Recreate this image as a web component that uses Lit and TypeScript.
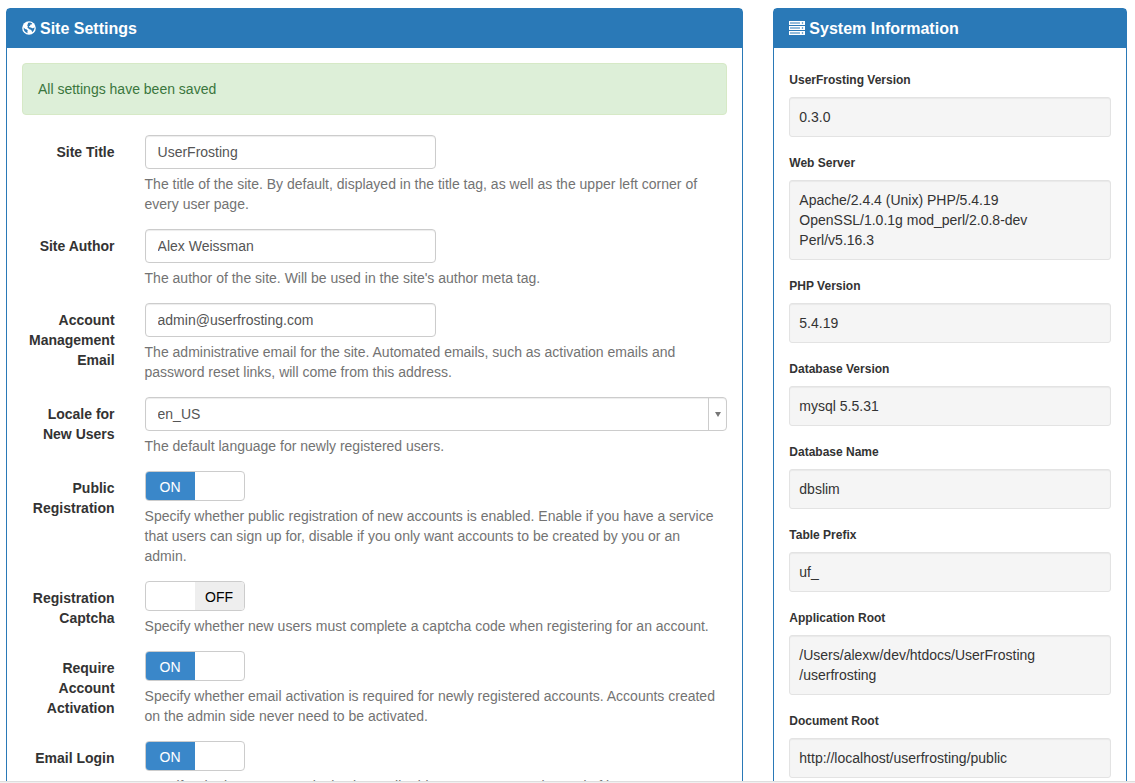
import { LitElement, html, css, svg, nothing } from "lit";
import { customElement, property } from "lit/decorators.js";

const FONT = css`14px/20px "Liberation Sans", Arial, sans-serif`;

@customElement("site-panel")
class SitePanel extends LitElement {
  @property() heading = "";

  static styles = css`
    :host {
      display: block;
      box-sizing: border-box;
      border: 1px solid #2a79b7;
      border-radius: 4px;
      background: #fff;
    }
    .head {
      display: flex;
      align-items: center;
      gap: 4px;
      padding: 10px 15px 8px;
      border-bottom: 1px solid #2a79b7;
      background: #2a79b7;
      color: #fff;
    }
    .title {
      margin: 0;
      font-size: 16px;
      line-height: 20px;
      font-weight: 700;
    }
    .body {
      padding: 15px;
    }
  `;

  render() {
    return html`
      <header class="head">
        <slot name="icon"></slot>
        <h3 class="title">${this.heading}</h3>
      </header>
      <div class="body"><slot></slot></div>
    `;
  }
}

type Field = {
  id: string;
  label: string;
  kind: "text" | "email" | "select" | "toggle";
  value?: string;
  on?: boolean;
  help: string;
};

const FIELDS: Field[] = [
  { id: "site_title", label: "Site Title", kind: "text", value: "UserFrosting", help: "The title of the site. By default, displayed in the title tag, as well as the upper left corner of every user page." },
  { id: "author", label: "Site Author", kind: "text", value: "Alex Weissman", help: "The author of the site. Will be used in the site's author meta tag." },
  { id: "admin_email", label: "Account Management Email", kind: "email", value: "admin@userfrosting.com", help: "The administrative email for the site. Automated emails, such as activation emails and password reset links, will come from this address." },
  { id: "default_locale", label: "Locale for New Users", kind: "select", value: "en_US", help: "The default language for newly registered users." },
  { id: "can_register", label: "Public Registration", kind: "toggle", on: true, help: "Specify whether public registration of new accounts is enabled. Enable if you have a service that users can sign up for, disable if you only want accounts to be created by you or an admin." },
  { id: "enable_captcha", label: "Registration Captcha", kind: "toggle", on: false, help: "Specify whether new users must complete a captcha code when registering for an account." },
  { id: "require_activation", label: "Require Account Activation", kind: "toggle", on: true, help: "Specify whether email activation is required for newly registered accounts. Accounts created on the admin side never need to be activated." },
  { id: "email_login", label: "Email Login", kind: "toggle", on: true, help: "Specify whether users can login via email address or username instead of just username." },
];

const INFO: [string, string[]][] = [
  ["UserFrosting Version", ["0.3.0"]],
  ["Web Server", ["Apache/2.4.4 (Unix) PHP/5.4.19 OpenSSL/1.0.1g mod_perl/2.0.8-dev Perl/v5.16.3"]],
  ["PHP Version", ["5.4.19"]],
  ["Database Version", ["mysql 5.5.31"]],
  ["Database Name", ["dbslim"]],
  ["Table Prefix", ["uf_"]],
  ["Application Root", ["/Users/alexw/dev/htdocs/UserFrosting", "/userfrosting"]],
  ["Document Root", ["http://localhost/userfrosting/public"]],
];

@customElement("app-root")
class AppRoot extends LitElement {
  static styles = css`
    :host {
      display: flex;
      flex-direction: column;
      height: 100vh;
      background: #fff;
      color: #333;
      font: ${FONT};
    }
    *,
    *::before,
    *::after {
      box-sizing: border-box;
    }
    .page {
      flex: 1;
      min-height: 0;
      overflow: hidden;
      display: grid;
      grid-template-columns: calc((100% + 30px) * 2 / 3 - 30px) minmax(0, 1fr);
      column-gap: 30px;
      align-items: start;
      padding: 8px 8px 0 6px;
    }
    .edge {
      flex: none;
      height: 2px;
      border-top: 1px solid #dedede;
      background: #f0f0f0;
    }
    .icon {
      display: block;
      margin-bottom: 2px;
      fill: #fff;
    }
    .alert {
      margin-bottom: 20px;
      padding: 15px;
      border: 1px solid #d6e9c6;
      border-radius: 4px;
      background: #ddefd8;
      color: #3a763d;
    }
    .form {
      display: grid;
      row-gap: 15px;
    }
    .row {
      display: grid;
      grid-template-columns: calc((100% + 30px) / 6 - 30px) minmax(0, 1fr);
      column-gap: 30px;
      align-items: start;
    }
    .name {
      padding-top: 7px;
      font-weight: 700;
      text-align: right;
    }
    .control {
      display: block;
      width: 100%;
      height: 34px;
      padding: 6px 12px;
      border: 1px solid #ccc;
      border-radius: 4px;
      background: #fff;
      box-shadow: inset 0 1px 1px rgba(0, 0, 0, 0.075);
      color: #555;
      font: inherit;
    }
    .half {
      width: 50%;
    }
    .picker {
      display: grid;
      grid-template-columns: minmax(0, 1fr) 19px;
    }
    .select {
      grid-area: 1 / 1 / 2 / 3;
      padding: 0 30px 0 12px;
      appearance: none;
    }
    .arrow {
      grid-area: 1 / 2;
      z-index: 1;
      display: flex;
      align-items: center;
      justify-content: center;
      padding-right: 1px;
      border-left: 1px solid #ccc;
      pointer-events: none;
    }
    .arrow::before {
      content: "";
      border: 3px solid transparent;
      border-top: 5px solid #777;
      border-bottom: 0;
    }
    .switch {
      display: grid;
      grid-template-columns: 1fr 1fr;
      width: 100px;
      height: 30px;
      border: 1px solid #ccc;
      border-radius: 4px;
      overflow: hidden;
      line-height: 30px;
      text-align: center;
      cursor: pointer;
    }
    .check {
      grid-area: 1 / 1 / 2 / 3;
      width: 100%;
      height: 100%;
      margin: 0;
      opacity: 0;
      cursor: pointer;
    }
    .on {
      grid-area: 1 / 1;
      background: #3a87c9;
      color: #fff;
    }
    .off {
      grid-area: 1 / 2;
      background: #eee;
      color: #000;
    }
    .help {
      margin: 5px 0 0;
      padding-right: 4px;
      color: #737373;
    }
    .info {
      margin: 11px 0 0;
    }
    .term {
      margin-bottom: 10px;
      font-size: 12px;
      line-height: 13px;
      font-weight: 700;
    }
    .well {
      margin: 0 0 20px;
      padding: 9px;
      border: 1px solid #e3e3e3;
      border-radius: 3px;
      background: #f5f5f5;
      box-shadow: inset 0 1px 1px rgba(0, 0, 0, 0.05);
    }
  `;

  private globe = svg`
    <circle cx="7" cy="7" r="6.8"></circle>
    <path fill="#2a79b7" d="M6.2 1.7 8.2 1.6 10.2 2.4 9.6 3.4 8.4 3.5 8.1 4.7 7 5.3 7.3 6.3 9 6.4 10.2 7.3 11.5 7.1 12.4 6.2 12.4 8 11.6 9.8 10.2 11.3 9.6 9.6 8.4 8.6 7.2 8.3 6.3 7.3 5.4 6.6 5.9 5.4 5.2 4.4 5.7 3.3ZM1.7 6.6 3.2 7.9 4.8 8.4 5.8 9.6 5.3 10.9 5.8 12.3 4 11.6 2.4 10 1.7 8.2Z"></path>
  `;

  private bars = svg`${[0, 5, 10].map(
    (y) => svg`
      <path d="M0 ${y}h16v4H0z"></path>
      <path fill="#2a79b7" fill-opacity=".5" d="M1 ${y + 1}h10v2H1z"></path>
      <circle cx="13.5" cy="${y + 2}" r=".8" fill="#2a79b7"></circle>`
  )}`;

  private control(f: Field) {
    if (f.kind === "toggle") {
      return html`<label class="switch">
        ${f.on ? html`<span class="on">ON</span>` : html`<span class="off">OFF</span>`}
        <input class="check" type="checkbox" id=${f.id} .checked=${!!f.on} />
      </label>`;
    }
    if (f.kind === "select") {
      return html`<div class="picker">
        <select class="control select" id=${f.id}><option selected>${f.value}</option></select>
        <span class="arrow"></span>
      </div>`;
    }
    return html`<input class="control half" type=${f.kind} id=${f.id} .value=${f.value ?? ""} />`;
  }

  render() {
    return html`
      <main class="page">
        <site-panel heading="Site Settings">
          <svg slot="icon" class="icon" width="14" height="14" viewBox="0 0 14 14">${this.globe}</svg>
          <div class="alert" role="status">All settings have been saved</div>
          <form class="form">
            ${FIELDS.map(
              (f) => html`<div class="row">
                <label class="name" for=${f.id}>${f.label}</label>
                <div>
                  ${this.control(f)}
                  <p class="help">${f.help}</p>
                </div>
              </div>`
            )}
          </form>
        </site-panel>
        <site-panel heading="System Information">
          <svg slot="icon" class="icon" width="16" height="14" viewBox="0 0 16 14">${this.bars}</svg>
          <dl class="info">
            ${INFO.map(
              ([term, parts]) => html`<dt class="term">${term}</dt>
                <dd class="well">${parts.map((p, i) => html`${i ? html`<wbr />` : nothing}${p}`)}</dd>`
            )}
          </dl>
        </site-panel>
      </main>
      <div class="edge"></div>
    `;
  }
}
